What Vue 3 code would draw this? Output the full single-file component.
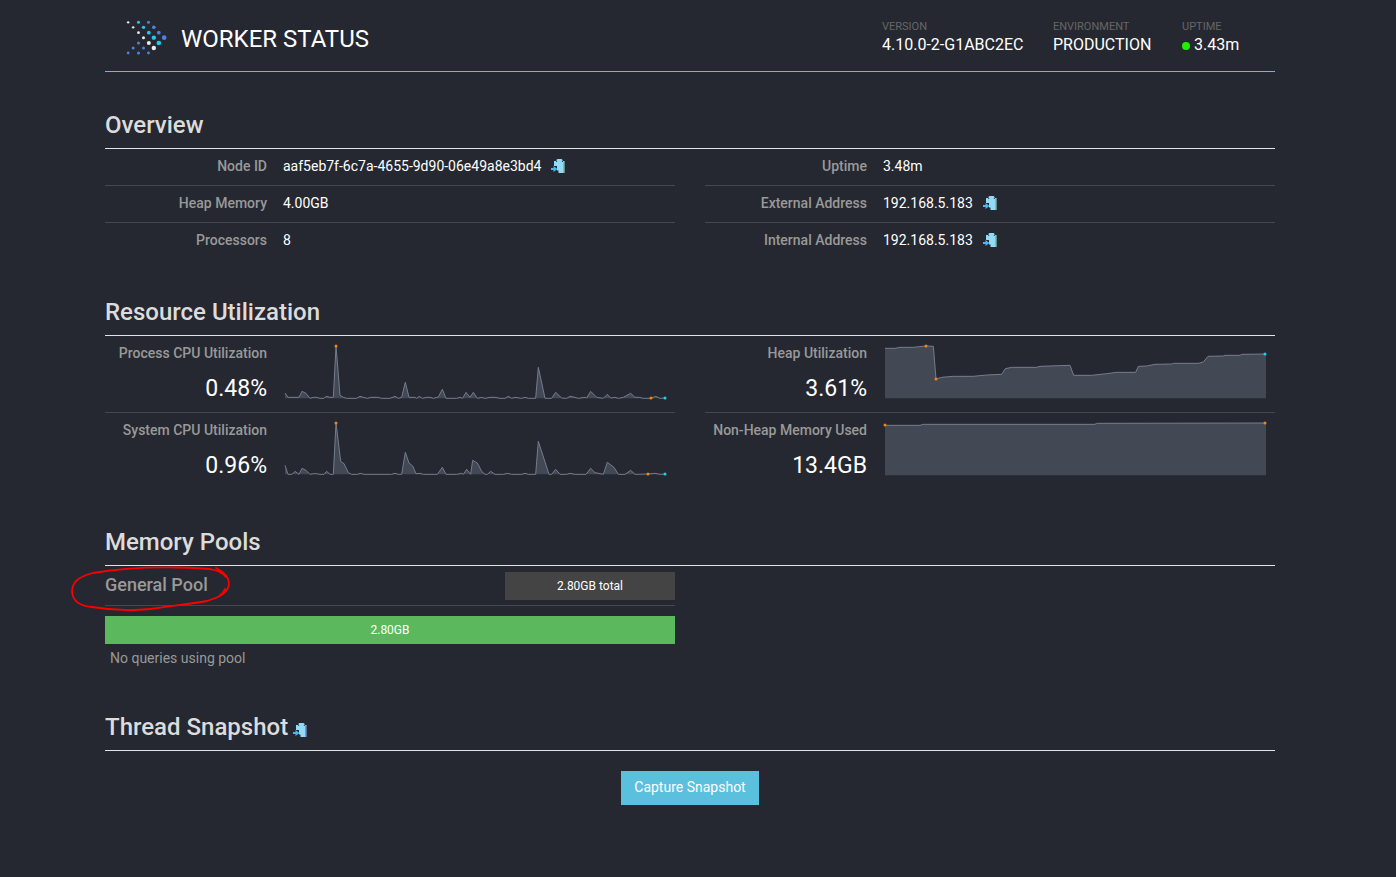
<script setup>
const logoDots = [
  [68,53,3.6,'#e8eef2'],[99,53,4.6,'#1ec8f0'],[129,53,4.6,'#4f7fe0'],
  [83,68,3.6,'#e8eef2'],[114,68,5,'#1ec8f0'],[145,68,5.5,'#4f7fe0'],
  [99,84,4.2,'#e8eef2'],[130,84,5.6,'#1ec8f0'],[160,84,5.6,'#4f7fe0'],
  [114,99,4.6,'#e8eef2'],[145,99,6.6,'#1ec8f0'],[176,99,7,'#4f7fe0'],
  [99,115,4.6,'#4f7fe0'],[130,115,6,'#e8eef2'],[160,115,7,'#1ec8f0'],
  [83,130,4.6,'#4f7fe0'],[114,130,4.6,'#4f7fe0'],[145,130,6.6,'#e8eef2'],
  [68,145,4.2,'#4f7fe0'],[99,145,4.6,'#4f7fe0'],[129,145,4.2,'#4f7fe0']
]
const leftRows = [
  { label: 'Node ID', value: 'aaf5eb7f-6c7a-4655-9d90-06e49a8e3bd4', copy: true },
  { label: 'Heap Memory', value: '4.00GB' },
  { label: 'Processors', value: '8' }
]
const rightRows = [
  { label: 'Uptime', value: '3.48m' },
  { label: 'External Address', value: '192.168.5.183', copy: true },
  { label: 'Internal Address', value: '192.168.5.183', copy: true }
]
const c1 = '15,165 24,178 57,178 66,160 78,166 90,181 100,178 110,178 120,181 132,181 138,175 150,178 160,178 168,24 180,172 190,178 200,181 230,181 240,175 250,178 262,181 272,178 295,178 305,181 330,181 345,175 355,181 365,178 376,133 387,178 405,178 410,181 418,175 427,181 440,178 450,178 460,181 475,177 487,154 498,181 530,181 540,178 548,181 558,163 570,178 580,163 592,181 605,178 615,181 630,178 645,178 660,181 675,181 685,175 695,181 705,178 725,181 735,178 745,181 767,181 775,88 795,181 815,181 827,163 845,180 860,181 870,175 885,178 895,181 915,178 920,180 932,160 950,178 970,181 982,169 992,180 1005,178 1015,181 1030,178 1052,166 1065,178 1078,178 1090,181 1113,181 1127,175 1140,181 1155,180'
const c2 = '15,160 24,187 36,187 45,178 57,187 66,169 78,175 90,187 100,185 110,185 120,187 132,187 140,178 150,187 160,187 168,33 182,148 192,155 205,182 215,187 232,187 242,184 252,187 335,187 345,184 355,187 365,187 376,121 387,153 398,162 408,185 420,184 430,187 472,187 487,166 498,187 530,187 545,184 550,187 560,172 572,187 578,145 592,153 605,178 615,187 622,187 632,178 645,187 670,187 683,184 695,187 725,187 735,184 745,187 767,187 775,88 807,187 815,187 827,172 840,187 860,187 870,184 885,187 918,187 932,169 945,182 970,187 982,151 1002,166 1015,187 1035,187 1052,175 1065,187 1104,186 1125,184 1140,187 1155,186'
const c3 = '15,31 45,31 60,28 100,28 138,24 160,25 168,123 185,118 220,115 280,115 320,111 365,109 376,92 395,88 470,88 480,85 570,82 581,112 635,112 680,107 710,103 767,103 775,85 800,84 825,79 875,78 880,76 955,76 970,72 984,55 1030,54 1035,52 1080,52 1085,49 1155,48'
const c4 = '15,40 120,40 130,37 645,37 650,34 1155,33'
const area = (pts, base, endX) => {
  const first = pts.split(' ')[0].split(',')[0]
  return `${first},${base} ${pts} ${endX},${pts.split(' ').pop().split(',')[1]} ${endX},${base}`
}
const rowsA = [
  { label: 'Process CPU Utilization', value: '0.48%', pts: c1, base: 181, end: 1155, markers: [[168,24,'#f5860a'],[1113,180,'#f5860a'],[1155,180,'#19d3f5']] },
  { label: 'System CPU Utilization', value: '0.96%', pts: c2, base: 187, end: 1155, markers: [[168,33,'#f5860a'],[1104,186,'#f5860a'],[1155,186,'#19d3f5']] }
]
const rowsB = [
  { label: 'Heap Utilization', value: '3.61%', pts: c3, base: 181, end: 1158, markers: [[138,24,'#f5860a'],[168,123,'#f5860a'],[1155,48,'#19d3f5']] },
  { label: 'Non-Heap Memory Used', value: '13.4GB', pts: c4, base: 190, end: 1158, markers: [[15,39,'#f5860a'],[1155,33,'#f5860a']] }
]
</script>

<template>
  <div class="page">
    <header class="top">
      <div class="brand">
        <svg class="logo" viewBox="50 40 140 120" width="47" height="40">
          <circle v-for="(d, i) in logoDots" :key="i" :cx="d[0]" :cy="d[1]" :r="d[2]" :fill="d[3]" />
        </svg>
        <span class="title">WORKER STATUS</span>
      </div>
      <div class="meta">
        <div class="meta-item m1"><div class="meta-k">VERSION</div><div class="meta-v">4.10.0-2-G1ABC2EC</div></div>
        <div class="meta-item m2"><div class="meta-k">ENVIRONMENT</div><div class="meta-v">PRODUCTION</div></div>
        <div class="meta-item m3"><div class="meta-k">UPTIME</div><div class="meta-v"><i class="dot"></i>3.43m</div></div>
      </div>
    </header>

    <section class="sec overview">
      <h3>Overview</h3>
      <div class="cols">
        <div class="col" v-for="(rows, ci) in [leftRows, rightRows]" :key="ci">
          <div class="row" v-for="r in rows" :key="r.label">
            <div class="k">{{ r.label }}</div>
            <div class="v">{{ r.value }}
              <svg v-if="r.copy" class="copy" viewBox="0 0 14 14" width="14" height="14">
                <path d="M3 2h2.500V.8L6.500 0h4l1 .8V2H13.500V14H3z" fill="#93daf7"/>
                <path d="M5 2.500h1.200M10.800 2.500h1.200" stroke="#2f5f7c" stroke-width="1"/>
                <path d="M13 2.500v11.500" stroke="#6a9a70" stroke-width="1"/>
                <path d="M3 7h3v7H3z" fill="#252830"/>
                <path d="M6 11.500h1.500V14H6z" fill="#252830"/>
                <path d="M0 9h2.500V7L6.500 10 2.500 13v-2H0z" fill="#45b9ef"/>
              </svg>
            </div>
          </div>
        </div>
      </div>
    </section>

    <section class="sec resource">
      <h3>Resource Utilization</h3>
      <div class="cols">
        <div class="col" v-for="(rows, ci) in [rowsA, rowsB]" :key="ci">
          <div class="chart-row" v-for="r in rows" :key="r.label">
            <div class="chart-text">
              <div class="k">{{ r.label }}</div>
              <div class="big">{{ r.value }}</div>
            </div>
            <svg class="spark" viewBox="0 0 1185 210" width="395" height="70">
              <polygon :points="area(r.pts, r.base, r.end)" fill="#434855" />
              <polyline :points="r.pts" fill="none" stroke="#747c8e" stroke-width="3" stroke-linejoin="round" />
              <circle v-for="(m, i) in r.markers" :key="i" :cx="m[0]" :cy="m[1]" r="4.5" :fill="m[2]" />
            </svg>
          </div>
        </div>
      </div>
    </section>

    <section class="sec pools">
      <h3>Memory Pools</h3>
      <div class="cols">
        <div class="col pool">
          <div class="pool-head">
            <span class="pool-name">General Pool</span>
            <span class="pool-total">2.80GB total</span>
          </div>
          <div class="pool-bar">2.80GB</div>
          <div class="pool-note">No queries using pool</div>
        </div>
        <div class="col"></div>
      </div>
    </section>

    <section class="sec thread">
      <h3>Thread Snapshot
        <svg class="copy small" viewBox="0 0 14 14" width="14" height="14">
          <path d="M3 2h2.500V.8L6.500 0h4l1 .8V2H13.500V14H3z" fill="#93daf7"/>
          <path d="M5 2.500h1.200M10.800 2.500h1.200" stroke="#2f5f7c" stroke-width="1"/>
          <path d="M13 2.500v11.500" stroke="#4a55c0" stroke-width="1"/>
          <path d="M3 7h3v7H3z" fill="#252830"/>
          <path d="M6 11.500h1.500V14H6z" fill="#252830"/>
          <path d="M0 9h2.500V7L6.500 10 2.500 13v-2H0z" fill="#45b9ef"/>
        </svg>
      </h3>
      <div class="btn-wrap"><button class="btn">Capture Snapshot</button></div>
    </section>

    <svg class="scribble" viewBox="0 0 200 60" width="200" height="60">
      <path d="M166 17C160 9 150 8 117 7.500 85 7 55 9 33 13 17 17 12 23 12 32 13 42 20 46 32 47 50 50 70 51 90 49 110 46 130 44 147 41 160 37 168 33 169 24 169 18 164 12 156 8M165 29C164 31 163 34 160 35" fill="none" stroke="#f00" stroke-width="1.8" stroke-linecap="round"/>
    </svg>
  </div>
</template>

<style>
html, body { background: #252830; margin: 0; }
</style>

<style scoped>
.page {
  width: 1170px;
  margin-left: 105px;
  position: relative;
  height: 877px;
  overflow: visible;
  font-family: Roboto, "Liberation Sans", sans-serif;
  font-size: 14px;
  color: #fff;
}
.top {
  height: 71px;
  border-bottom: 1px solid #3dcdec;
  display: flex;
  justify-content: space-between;
}
.brand { display: flex; align-items: center; padding: 6px 0 0 17px; }
.logo { display: block; margin-top: -1px; }
.title { font-size: 24px; margin-left: 12px; line-height: 28px; color: #fff; }
.meta { display: flex; padding-top: 21px; }
.meta-k { font-size: 11px; line-height: 12px; color: #666; }
.meta-v { font-size: 16px; line-height: 23px; color: #fff; white-space: nowrap; }
.m1 { width: 171px; }
.m2 { width: 129px; }
.m3 { width: 93px; }
.dot {
  display: inline-block;
  width: 8px;
  height: 8px;
  border-radius: 50%;
  background: #20f000;
  margin-right: 4px;
  vertical-align: 0;
}
h3 {
  margin: 0;
  font-size: 24px;
  font-weight: 500;
  line-height: 26px;
  color: #dcdcdc;
  padding-bottom: 10px;
  border-bottom: 1px solid #e4e4e4;
}
.overview { padding-top: 40px; }
.resource { padding-top: 40px; }
.pools { padding-top: 40px; }
.thread { padding-top: 46px; }
.cols { display: flex; gap: 30px; }
.col { width: 570px; }
.row {
  display: flex;
  height: 34px;
  padding-bottom: 2px;
  align-items: center;
  border-bottom: 1px solid #44474e;
}
.row:last-child { border-bottom: 0; }
.k {
  width: 162px;
  flex: none;
  text-align: right;
  color: #999;
  font-weight: 500;
  font-size: 14px;
  white-space: nowrap;
}
.v {
  margin-left: 16px;
  color: #fff;
  font-size: 14px;
  display: flex;
  align-items: center;
  white-space: nowrap;
}
.copy { margin-left: 10px; display: block; }
.chart-row {
  display: flex;
  height: 76px;
  border-bottom: 1px solid #44474e;
}
.chart-row:last-child { border-bottom: 0; }
.chart-text { width: 162px; flex: none; text-align: right; padding-top: 9px; }
.big { font-size: 23px; line-height: 28px; margin-top: 14px; color: #fff; }
.spark { display: block; margin-left: 13px; margin-top: 2px; flex: none; }
.chart-row:last-child .spark { margin-top: -1px; }
.pool-head {
  display: flex;
  justify-content: space-between;
  align-items: center;
  height: 39px;
  border-bottom: 1px solid #44474e;
}
.pool-name { font-size: 18px; font-weight: 500; color: #999; line-height: 24px; margin-top: -2px; }
.pool-total {
  width: 170px;
  height: 28px;
  line-height: 28px;
  background: #444;
  color: #fff;
  font-size: 12px;
  text-align: center;
}
.pool-bar {
  margin-top: 10px;
  height: 28px;
  line-height: 28px;
  background: #5cb85c;
  color: #fff;
  font-size: 12px;
  text-align: center;
}
.pool-note { color: #999; font-size: 14px; line-height: 20px; margin: 4px 0 0 5px; }
.copy.small { display: inline-block; margin-left: -1px; vertical-align: -2px; }
.btn-wrap { display: flex; justify-content: center; padding-top: 20px; }
.btn {
  width: 138px;
  height: 34px;
  background: #5bc0de;
  border: 0;
  padding: 0 0 2px;
  color: #fff;
  font: 400 14px Roboto, "Liberation Sans", sans-serif;
}
.scribble { position: absolute; left: -45px; top: 560px; }
</style>
